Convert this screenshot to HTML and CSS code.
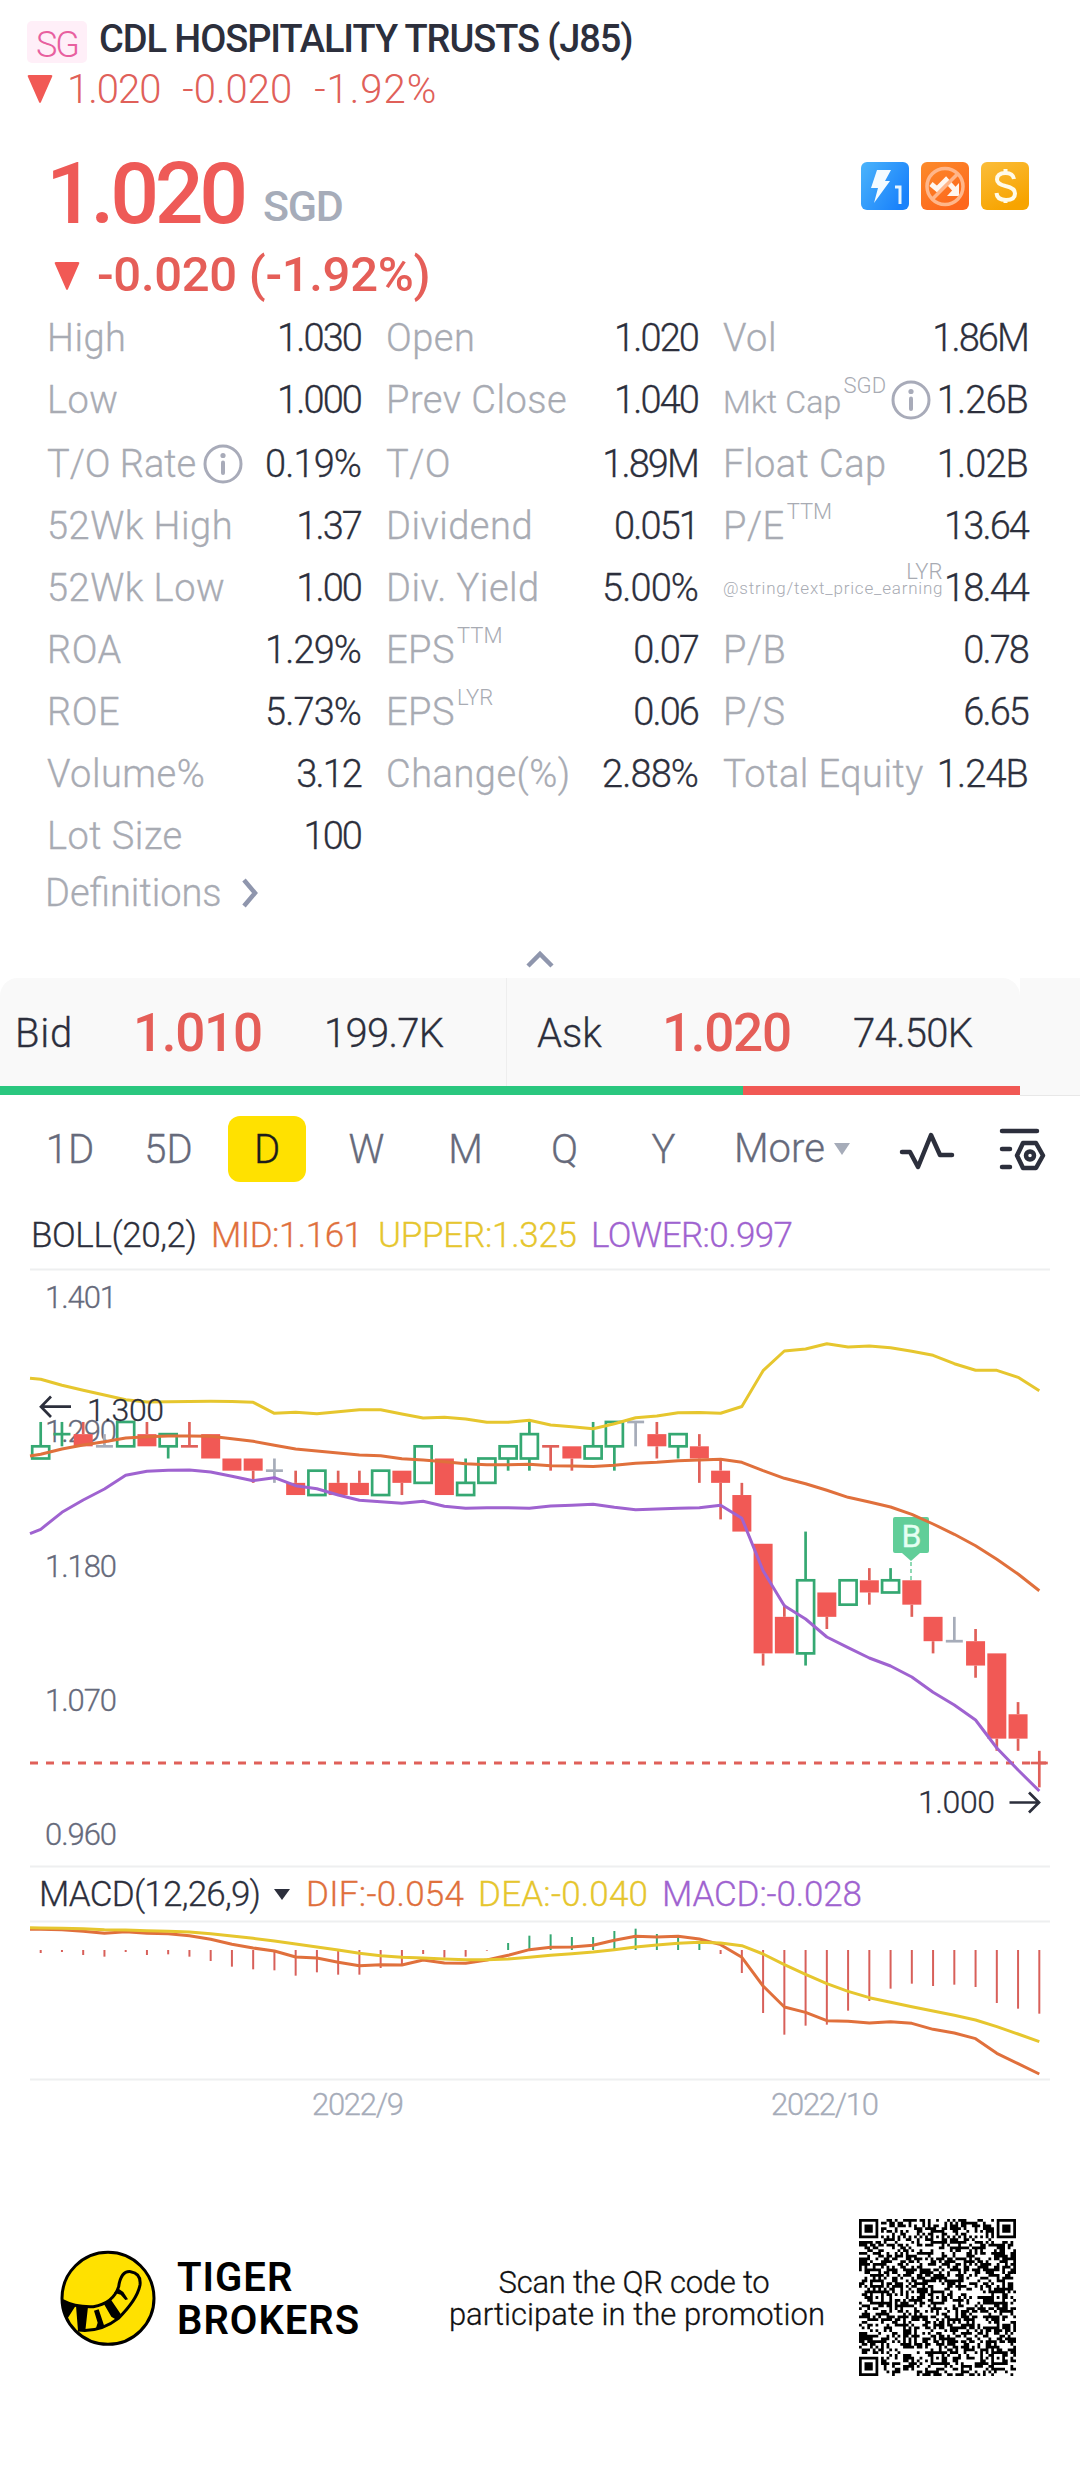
FILE: index.html
```html
<!DOCTYPE html>
<html lang="en">
<head>
<meta charset="utf-8">
<title>CDL HOSPITALITY TRUSTS (J85)</title>
<link rel="stylesheet" href="styles.css">
</head>
<body>
<header class="top">
  <div class="top-name"><span class="market">SG</span><h1>CDL HOSPITALITY TRUSTS (J85)</h1></div>
  <div class="top-quote">
    <svg class="tri" width="26" height="30" viewBox="0 0 26 30"><path d="M2 1H24Q26 1 25 3L14 28Q13 30 12 28L1 3Q0 1 2 1Z"/></svg>
    <span>1.020</span><span class="diff">-0.020</span><span class="pct">-1.92%</span>
  </div>
</header>

<section class="quote">
  <div class="price-row">
    <span class="price">1.020</span><span class="currency">SGD</span>
    <div class="badges">
      <svg width="48" height="48" viewBox="0 0 48 48">
        <defs><linearGradient id="blue" x1="0" y1="0" x2="1" y2="0.6"><stop offset="0" stop-color="#4bb4fb"/><stop offset="1" stop-color="#1a82fb"/></linearGradient></defs>
        <rect width="48" height="48" rx="6" fill="url(#blue)"/>
        <path d="M16 8H30L24 19H29L13 41L17 26H10Z" fill="#f4fbff"/>
        <path d="M34 25H39V42" fill="none" stroke="#e8f5ff" stroke-width="3"/>
      </svg>
      <svg width="48" height="48" viewBox="0 0 48 48">
        <defs><linearGradient id="orange" x1="0" y1="0" x2="0.6" y2="1"><stop offset="0" stop-color="#fc8b2b"/><stop offset="1" stop-color="#fd671c"/></linearGradient></defs>
        <rect width="48" height="48" rx="6" fill="url(#orange)"/>
        <path d="M10 22L16 27L25 18L34 28" fill="none" stroke="#fff6ee" stroke-width="5"/>
        <path d="M38 21V34H26Z" fill="#fff6ee"/>
        <circle cx="24" cy="24.500" r="18" fill="none" stroke="#ffb68a" stroke-width="3.500"/>
        <path d="M11.500 37L36.500 12" stroke="#ffb68a" stroke-width="3.500"/>
      </svg>
      <svg width="48" height="48" viewBox="0 0 48 48">
        <defs><linearGradient id="gold" x1="0" y1="0" x2="0.5" y2="1"><stop offset="0" stop-color="#fbbd3a"/><stop offset="1" stop-color="#f7a400"/></linearGradient></defs>
        <rect width="48" height="48" rx="6" fill="url(#gold)"/>
        <path d="M33 17Q32 11 24.500 11Q16 11 16 17.500Q16 22 24.500 24Q34 26 34 31.500Q34 38 25 38Q16 38 15.500 31M24.500 7V12M24.500 37V41" fill="none" stroke="#fffbe9" stroke-width="4"/>
      </svg>
    </div>
  </div>
  <div class="change-row">
    <svg class="tri" width="26" height="30" viewBox="0 0 26 30"><path d="M2 1H24Q26 1 25 3L14 28Q13 30 12 28L1 3Q0 1 2 1Z"/></svg>
    <span>-0.020 (-1.92%)</span>
  </div>
</section>

<section class="stats">
  <div class="stat"><span class="k">High</span><span class="v">1.030</span></div>
  <div class="stat"><span class="k">Open</span><span class="v">1.020</span></div>
  <div class="stat"><span class="k">Vol</span><span class="v">1.86M</span></div>

  <div class="stat"><span class="k">Low</span><span class="v">1.000</span></div>
  <div class="stat"><span class="k">Prev Close</span><span class="v">1.040</span></div>
  <div class="stat"><span class="k k-cap">Mkt Cap</span><span class="sup">SGD</span><svg class="info" width="40" height="40" viewBox="0 0 40 40"><circle cx="20" cy="20" r="18"/><path d="M20 18.500V29"/><circle class="dot" cx="20" cy="11.500" r="2.600"/></svg><span class="v wide">1.26B</span></div>

  <div class="stat"><span class="k k-rate">T/O Rate</span><svg class="info" width="40" height="40" viewBox="0 0 40 40"><circle cx="20" cy="20" r="18"/><path d="M20 18.500V29"/><circle class="dot" cx="20" cy="11.500" r="2.600"/></svg><span class="v wide">0.19%</span></div>
  <div class="stat"><span class="k">T/O</span><span class="v">1.89M</span></div>
  <div class="stat"><span class="k">Float Cap</span><span class="v wide">1.02B</span></div>

  <div class="stat"><span class="k">52Wk High</span><span class="v">1.37</span></div>
  <div class="stat"><span class="k">Dividend</span><span class="v">0.051</span></div>
  <div class="stat"><span class="k">P/E</span><span class="sup">TTM</span><span class="v">13.64</span></div>

  <div class="stat"><span class="k">52Wk Low</span><span class="v">1.00</span></div>
  <div class="stat"><span class="k">Div. Yield</span><span class="v wide">5.00%</span></div>
  <div class="stat"><span class="k k-tiny">@string/text_price_earning</span><span class="sup sup-over">LYR</span><span class="v">18.44</span></div>

  <div class="stat"><span class="k">ROA</span><span class="v wide">1.29%</span></div>
  <div class="stat"><span class="k">EPS</span><span class="sup">TTM</span><span class="v">0.07</span></div>
  <div class="stat"><span class="k">P/B</span><span class="v">0.78</span></div>

  <div class="stat"><span class="k">ROE</span><span class="v wide">5.73%</span></div>
  <div class="stat"><span class="k">EPS</span><span class="sup">LYR</span><span class="v">0.06</span></div>
  <div class="stat"><span class="k">P/S</span><span class="v">6.65</span></div>

  <div class="stat"><span class="k">Volume%</span><span class="v">3.12</span></div>
  <div class="stat"><span class="k">Change(%)</span><span class="v wide">2.88%</span></div>
  <div class="stat"><span class="k">Total Equity</span><span class="v wide">1.24B</span></div>

  <div class="stat"><span class="k">Lot Size</span><span class="v">100</span></div>
</section>
<div class="definitions"><span>Definitions</span><svg width="20" height="32" viewBox="0 0 20 32"><path d="M4 3L15 16L4 29"/></svg></div>
<div class="collapse"><svg width="32" height="20" viewBox="0 0 32 20"><path d="M4 16L16 4L28 16"/></svg></div>

<section class="book">
  <div class="book-main">
    <div class="sides">
      <div class="side bid"><span class="side-name">Bid</span><span class="side-price">1.010</span><span class="side-vol">199.7K</span></div>
      <div class="side ask"><span class="side-name">Ask</span><span class="side-price">1.020</span><span class="side-vol">74.50K</span></div>
    </div>
    <div class="ratio"><i class="ratio-bid"></i><i class="ratio-ask"></i></div>
  </div>
  <div class="book-rest"></div>
</section>

<nav class="tabs">
  <span class="tab t-1d">1D</span><span class="tab t-5d">5D</span><span class="tab on">D</span><span class="tab">W</span><span class="tab">M</span><span class="tab">Q</span><span class="tab">Y</span>
  <span class="more">More<svg width="18" height="14" viewBox="0 0 18 14"><path d="M1 1H17L9 13Z"/></svg></span>
  <svg class="tool pulse" width="56" height="40" viewBox="0 0 56 40"><path d="M3 21H11L19 36L32 4L41 24H53"/></svg>
  <svg class="tool settings" width="50" height="46" viewBox="0 0 50 46"><path d="M4 4H39M4 22H12M4 40H12"/><path d="M25 16H38L45 28.500L38 41H25L19 28.500Z"/><circle cx="32" cy="28.500" r="4"/></svg>
</nav>

<svg id="chart" class="chart" width="1080" height="930" viewBox="0 1210 1080 930"></svg>

<footer class="promo">
  <svg class="logo" width="120" height="116" viewBox="0 0 360 348">
    <circle cx="174" cy="175" r="138" fill="#ffe100" stroke="#000" stroke-width="9"/>
    <path d="M38 182Q75 202 130 200Q190 190 206 140Q213 92 242 95Q274 100 270 135Q262 178 205 235Q150 278 84 270" fill="none" stroke="#000" stroke-width="9"/>
    <path d="M34 180L78 196L52 236Q36 210 34 180ZM78 197L114 200L106 272L84 272ZM132 212L146 208L164 262L138 264L143 248ZM160 189L182 178L212 222L200 240L184 230ZM192 158L206 146L220 156L234 178L226 180L212 164Z" fill="#000"/>
  </svg>
  <div class="brand">TIGER<br>BROKERS</div>
  <div class="scan"><span class="scan-1">Scan the QR code to</span><span class="scan-2">participate in the promotion</span></div>
  <svg id="qr" class="qr" width="157" height="157" viewBox="0 0 57 57"></svg>
</footer>
<script src="chart.js"></script>
</body>
</html>
```
FILE: styles.css
```css
* { box-sizing: border-box; }
body { margin: 0; width: 1080px; height: 2471px; background: #fff; color: #2c2f3c; font-family: Roboto, "Liberation Sans", sans-serif; overflow: hidden; }
svg { display: block; flex: none; }
span { white-space: nowrap; }

.top { height: 146px; padding: 17px 0 0 27px; }
.top-name { display: flex; align-items: flex-start; height: 48px; }
.market { width: 60px; height: 42px; margin-top: 4px; border-radius: 5px; background: #ffeff8; color: #e8609f; font-size: 36px; line-height: 48px; font-weight: 350; text-align: center; letter-spacing: -2px; }
h1 { margin: 0 0 0 12px; font-size: 38px; line-height: 45px; font-weight: 500; letter-spacing: -1.080px; white-space: nowrap; }
.top-quote { display: flex; align-items: center; height: 48px; color: #e06059; font-size: 40px; font-weight: 350; letter-spacing: -1px; }
.top-quote .tri { margin-right: 14px; }
.top-quote span { margin-right: 22px; }
.top-quote .diff { letter-spacing: 0; }
.top-quote .pct { letter-spacing: 1px; }
.tri { fill: #f15955; }

.quote { height: 161px; padding-left: 48px; }
.price-row { display: flex; height: 96px; align-items: center; }
.price { margin-left: -2px; color: #ee5a57; font-size: 86px; line-height: 96px; font-weight: 500; letter-spacing: -4.300px; }
.currency { margin: 24px 0 0 19px; color: #a6acb9; font-size: 43px; line-height: 48px; font-weight: 500; letter-spacing: -1.300px; }
.badges { display: flex; gap: 12px; margin: -16px 51px 0 auto; }
.change-row { display: flex; align-items: center; height: 64px; padding-left: 6px; color: #e55e58; font-size: 49px; font-weight: 500; letter-spacing: -0.300px; }
.change-row .tri { margin: 4px 17px 0 0; }

.stats { display: grid; grid-template-columns: 313px 311px 304px; column-gap: 26px; grid-template-rows: 62px 64px repeat(7, 62px); margin-left: 48px; }
.stat { display: flex; align-items: center; height: 62px; line-height: 62px; }
.k { margin-left: -1px; color: #a8abb3; font-size: 38px; font-weight: 350; letter-spacing: 0.500px; -webkit-text-stroke: 0.3px #a8abb3; }
.v { margin-left: auto; font-size: 38px; font-weight: 350; letter-spacing: -1.900px; -webkit-text-stroke: 0.3px #2c2f3c; }
.wide { letter-spacing: -0.900px; }
.k-cap { padding-top: 4px; font-size: 32px; letter-spacing: 0.200px; }
.k-rate { letter-spacing: 0; }
.k-tiny { font-size: 17px; letter-spacing: 0.800px; -webkit-text-stroke: 0; }
.sup { align-self: flex-start; margin: 2px 0 0 2px; color: #a8abb3; font-size: 22px; line-height: 30px; font-weight: 350; }
.sup-over { width: 36px; margin: 0 0 0 -37px; }
.info { margin-left: 5px; fill: none; stroke: #a8abb9; stroke-width: 3; stroke-linecap: round; }
.k-rate + .info { margin-left: 7px; }
.info path { stroke-width: 4; }
.info .dot { fill: #a8abb9; stroke: none; }

.definitions { display: flex; align-items: center; height: 50px; padding: 2px 0 0 45px; color: #a8abb3; font-size: 38px; font-weight: 350; -webkit-text-stroke: 0.3px #a8abb3; }
.definitions svg { margin-left: 18px; fill: none; stroke: #8f96ad; stroke-width: 4.500; }
.collapse { display: flex; justify-content: center; height: 61px; padding-top: 33px; }
.collapse svg { fill: none; stroke: #8f96ad; stroke-width: 4.500; }

.book { display: flex; height: 118px; }
.book-main { width: 1020px; }
.sides { display: flex; height: 108px; border-radius: 18px 18px 0 0; background: #f9f9f9; }
.side { display: flex; align-items: center; padding-top: 2px; font-size: 40px; font-weight: 350; }
.bid { width: 507px; padding-left: 15px; border-right: 1px solid #eee; }
.ask { padding-left: 30px; }
.side-name { width: 118px; letter-spacing: 0.700px; -webkit-text-stroke: 0.3px #2c2f3c; }
.ask .side-name { width: 125px; letter-spacing: 0; }
.side-price { width: 191px; color: #e55e58; font-size: 53px; font-weight: 500; letter-spacing: -1.300px; }
.side-vol { letter-spacing: -0.700px; -webkit-text-stroke: 0.3px #2c2f3c; }
.ratio { display: flex; height: 9px; }
.ratio-bid { width: 743px; background: #2ac77f; }
.ratio-ask { flex: 1; background: #f15955; }
.book-rest { width: 60px; background: #f9f9f9; border-bottom: 1px solid #e8e8e8; }

.tabs { display: flex; align-items: center; height: 114px; padding: 0 0 8px 31px; color: #666a7b; font-size: 40px; font-weight: 350; -webkit-text-stroke: 0.3px; }
.tab { flex: none; width: 99px; height: 66px; line-height: 68px; text-align: center; }
.t-1d { width: 78px; }
.t-5d { width: 119px; }
.on { width: 78px; margin-right: 40px; border-radius: 12px; background: #ffe100; color: #1c1c1c; }
.tab.on + .tab { margin-left: -29px; }
.more { display: flex; flex: none; align-items: center; margin-left: 21px; width: 165px; line-height: 68px; }
.more svg { margin-left: 8px; fill: #a6acb9; }
.tool { fill: none; stroke: #2c2f3c; stroke-width: 4.500; stroke-linecap: round; stroke-linejoin: round; }
.pulse { margin-top: 4px; }
.settings { margin: 2px 0 0 43px; }

.chart { font-size: 31px; }
.line { fill: none; stroke-width: 3; stroke-linejoin: round; }
.grid { stroke: #eeeff0; stroke-width: 2; }

.promo { display: flex; margin-top: 50px; padding: 9px 0 0 50px; height: 280px; }
.promo .logo { margin-top: 41px; }
.brand { margin: 57px 0 0 7px; width: 254px; color: #000; font-size: 40px; line-height: 43px; font-weight: 650; letter-spacing: 1px; }
.scan { display: flex; flex-direction: column; width: 412px; align-items: center; padding-top: 68px; color: #111; font-size: 31px; line-height: 32px; font-weight: 350; -webkit-text-stroke: 0.3px; }
.scan-1 { margin-right: 6px; letter-spacing: -0.250px; }
.scan-2 { letter-spacing: 0.030px; }
.qr { margin: 20px 0 0 16px; fill: #000; }
```
FILE: chart.js
```js
const svg = document.getElementById('chart');
const X0 = 40.7, STEP = 21.247;
const x = i => +(X0 + STEP * i).toFixed(2);
const y = cents => +(1763 - (cents - 102) * 12.18).toFixed(2);
let out = '';
const line = (x1, y1, x2, y2, color, w = 2.7, extra = '') => {
  out += `<line x1="${x1}" y1="${y1}" x2="${x2}" y2="${y2}" stroke="${color}" stroke-width="${w}" ${extra}/>`;
};
const text = (s, left, base, width, size, color, weight = 350) => {
  out += `<text x="${left}" y="${base}" textLength="${width}" font-size="${size}" fill="${color}" stroke="${color}" stroke-width="0.3" font-weight="${weight}">${s}</text>`;
};
const RED = '#f15955', GREEN = '#35a872', GRAY = '#a6acb9', INK = '#2c2f3c';
const MID = '#e0703c', UP = '#e6c62e', LOW = '#9f63d0';

// separators
[1269, 1866, 1921, 2079].forEach(v => { out += `<path class="grid" d="M30 ${v + 0.5}H1050"/>`; });

// price axis
[['1.401', 1308], ['1.290', 1442], ['1.180', 1576.500], ['1.070', 1711], ['0.960', 1845]].forEach(([s, b]) => text(s, 45, b, 72, 31, '#666a7b'));

// open, close, high, low in cents
const candles = [
  [127,128,130,127,'g'],[129,129,130,128,'g'],[129,128,130,128,'r'],[128,128,129,128,'n'],[128,130,130,128,'g'],
  [129,128,130,128,'r'],[128,129,129,127,'g'],[128,128,130,128,'r'],[129,127,129,127,'r'],[127,126,127,126,'r'],
  [127,126,127,125,'r'],[126,126,127,125,'n'],[125,124,126,124,'r'],[124,126,126,124,'g'],[125,124,126,124,'r'],
  [125,124,126,124,'r'],[124,126,126,124,'g'],[126,125,126,124,'r'],[125,128,128,125,'g'],[127,124,127,124,'r'],
  [124,125,127,124,'g'],[125,127,127,125,'g'],[127,128,128,126,'g'],[127,129,130,126,'g'],[128,128,128,126,'r'],
  [128,127,128,126,'r'],[127,128,130,127,'g'],[128,130,130,126,'g'],[130,130,130,128,'n'],[129,128,130,127,'r'],
  [128,129,129,127,'g'],[128,127,129,125,'r'],[126,125,127,122,'r'],[124,121,125,121,'r'],[120,111,120,110,'r'],
  [114,111,115,111,'r'],[111,117,121,110,'g'],[116,114,116,113,'r'],[115,117,117,115,'g'],[117,116,118,115,'r'],
  [116,117,118,116,'g'],[117,115,117,114,'r'],[114,112,114,111,'r'],[112,112,114,112,'n'],[112,110,113,109,'r'],
  [111,104,111,103,'r'],[106,104,107,103,'r'],[102,102,103,100,'r']
];
line(30, 1763, 1048, 1763, '#e06059', 3, 'stroke-dasharray="8 8"');
candles.forEach(([o, c, h, l, t], i) => {
  const color = { r: RED, g: GREEN, n: GRAY }[t], wick = t === 'r' ? '#e06059' : color;
  const top = Math.max(o, c), bot = Math.min(o, c);
  if (h > top) line(x(i), y(h), x(i), y(top), wick);
  if (l < bot) line(x(i), y(bot), x(i), y(l), wick);
  if (o === c) line(x(i) - 8.5, y(o), x(i) + 8.5, y(o), wick);
  else if (t === 'g') out += `<rect x="${x(i) - 8.5}" y="${y(top)}" width="17" height="${y(bot) - y(top)}" fill="none" stroke="${GREEN}" stroke-width="2.7"/>`;
  else out += `<rect x="${x(i) - 9.5}" y="${y(top)}" width="19" height="${y(bot) - y(top)}" fill="${RED}"/>`;
});

// buy marker
line(911, 1562, 911, 1580, '#8fd9b4', 2, 'stroke-dasharray="4 3"');
out += '<path d="M895 1517H927Q929 1517 929 1519V1551Q929 1553 927 1553H920L911 1561L902 1553H895Q893 1553 893 1551V1519Q893 1517 895 1517Z" fill="#61ce99"/>';
text('B', 901.500, 1547, 20, 32, '#e4fff2', 400);

const curve = (ys, first, color) => {
  out += `<path class="line" stroke="${color}" d="M30 ${first}L${ys.map((v, i) => x(i) + ' ' + v).join('L')}"/>`;
};
curve([1379.3,1385.3,1390.3,1395,1399.7,1402,1401.7,1401.5,1401.3,1401.5,1402.3,1413.3,1412.3,1413.7,1411.7,1409.7,1409.7,1414,1418,1417.3,1419,1422.3,1422.3,1420.3,1425,1426.7,1428.7,1423.7,1417.7,1416,1412.7,1412.5,1413.3,1406.5,1370.7,1351,1349,1343.7,1347,1346,1347.7,1351.3,1355.3,1363.7,1370.3,1370.3,1377.3,1390.7], 1378.3, UP);
curve([1454.3,1449,1445,1441.7,1438,1436.7,1436,1436,1436.3,1438.7,1441.3,1445.3,1449,1451,1453,1455,1455.7,1458.7,1460,1461.7,1463.7,1464.7,1464.8,1464.3,1465.7,1466,1466.5,1465.3,1463.3,1462.3,1460.7,1460,1459.3,1462.3,1470.7,1478.3,1483.7,1490.3,1497.3,1502,1507,1514.3,1524,1534.3,1545.7,1559.3,1574,1590.7], 1456, MID);
curve([1529.3,1512.3,1500,1489,1475.3,1471.3,1470.3,1470,1472,1476.3,1480.7,1477.7,1485.7,1488.7,1495,1500.3,1501.7,1503.3,1501.3,1506.3,1508.3,1507.7,1507.7,1508.3,1506,1505.3,1504.3,1507.3,1509.7,1509,1508.3,1507.7,1505.3,1518.3,1570.7,1605.7,1619,1637,1647.7,1658,1666,1677,1692.3,1705,1720,1748,1770,1791], 1533.7, LOW);

// MACD panel, values in thirds of a pixel below its top
const m = v => +(1840 + v / 3).toFixed(2);
[339,336,345,350,336,345,343,350,363,380,388,391,407,397,404,404,384,374,342,353,350,332,309,287,283,291,291,273,266,282,288,311,342,399,519,584,557,554,512,483,446,431,438,434,441,489,506,521]
  .forEach((v, i) => line(x(i), m(330), x(i), m(v), v < 330 ? GREEN : '#d8605a', 2));
curve([268,269,274,280,275,280,281,287,298,313,324,333,351,354,367,377,374,375,360,369,370,360,346,329,322,321,316,301,289,291,289,297,314,352,438,501,517,542,544,549,545,550,568,579,596,640,671,702].map(m), m(268), MID);
curve([264,265,266,269,270,272,274,276,281,288,295,303,312,321,330,340,347,352,354,357,359,359,357,352,346,341,336,329,321,315,310,307,309,317,342,374,403,431,454,473,487,500,513,526,540,560,582,605].map(m), m(263), UP);

// legends
text('BOLL(20,2)', 31, 1247, 166, 35, INK);
text('MID:1.161', 211, 1247, 152, 35, MID);
text('UPPER:1.325', 378, 1247, 199, 35, UP);
text('LOWER:0.997', 591, 1247, 202, 35, LOW);
text('MACD(12,26,9)', 39, 1906, 222, 35, INK);
out += `<path d="M274 1889H290L282 1900Z" fill="${INK}"/>`;
text('DIF:-0.054', 306, 1906, 158, 35, MID);
text('DEA:-0.040', 478, 1906, 170, 35, UP);
text('MACD:-0.028', 662, 1906, 200, 35, LOW);

// dates
text('2022/9', 312, 2115, 92, 31, GRAY);
text('2022/10', 771, 2115, 108, 31, GRAY);

// extremes
text('1.300', 87, 1421, 77, 32, INK);
text('1.000', 918, 1813, 77, 32, INK);
out += `<path d="M71 1406.700H41M51 1396.500L41 1406.700L51 1417M1009.500 1802.500H1039M1029 1792.500L1039 1802.500L1029 1812.500" fill="none" stroke="${INK}" stroke-width="2.7"/>`;
svg.innerHTML = out;

// QR code
const N = 57;
let seed = 20221;
const rnd = () => (seed = (seed * 1103515245 + 12345) % 2147483648) / 2147483648;
const finder = (r, c, r0, c0) => {
  const a = r - r0, b = c - c0;
  if (a < -1 || a > 7 || b < -1 || b > 7) return null;
  const d = Math.max(Math.abs(a - 3), Math.abs(b - 3));
  return d !== 2 && d < 4;
};
const align = (r, c) => {
  for (const p of [6, 28, 50]) for (const q of [6, 28, 50]) {
    if ((p === 6 && q !== 28) || (q === 6 && p !== 28)) continue;
    const d = Math.max(Math.abs(r - p), Math.abs(c - q));
    if (d <= 2) return d !== 1;
  }
  return null;
};
let cells = '';
for (let r = 0; r < N; r++) for (let c = 0; c < N; c++) {
  const bit = rnd() < 0.5;
  const on = finder(r, c, 0, 0) ?? finder(r, c, 0, N - 7) ?? finder(r, c, N - 7, 0) ?? align(r, c) ?? (r === 6 || c === 6 ? (r + c) % 2 === 0 : bit);
  if (on) cells += `M${c} ${r}h1v1h-1z`;
}
document.getElementById('qr').innerHTML = `<path d="${cells}"/>`;
```
